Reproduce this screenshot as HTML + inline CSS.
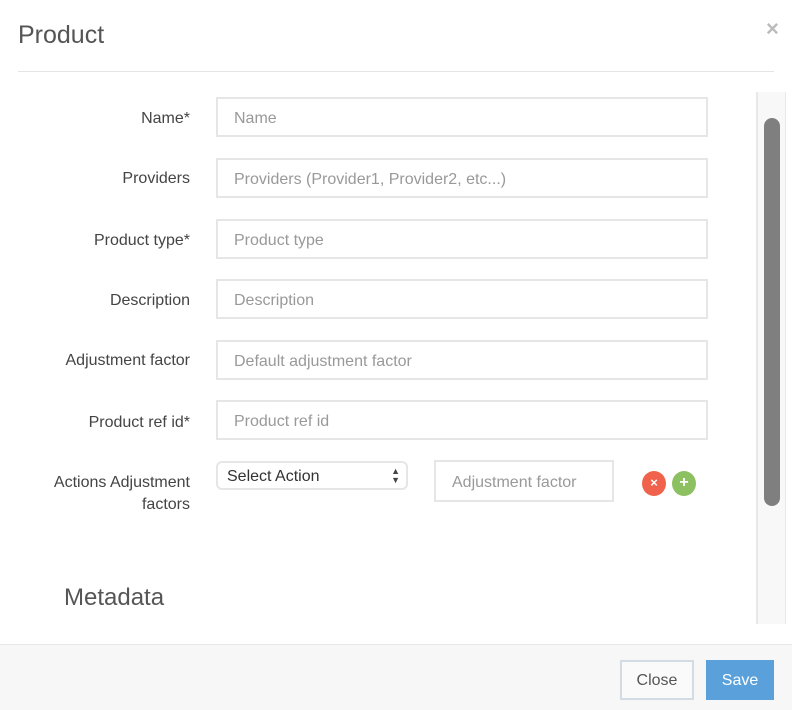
<!DOCTYPE html>
<html><head><style>
*{box-sizing:border-box;margin:0;padding:0}
body{width:792px;height:710px;background:#fff;font-family:"Liberation Sans",sans-serif;position:relative;overflow:hidden;color:#444}
.a{position:absolute}
.lbl{position:absolute;right:602px;font-size:16px;color:#444;text-align:right;line-height:22px}
.in{position:absolute;left:216px;width:492px;height:40px;border:2px solid #e6e6e6;font-size:16px;color:#999;padding-left:16px;line-height:39px}
</style></head><body>
<div class="a" style="left:18px;top:21px;font-size:25px;color:#555">Product</div>
<div class="a" style="left:766px;top:16px;font-size:22px;color:#bbb;font-weight:bold">×</div>
<div class="a" style="left:18px;top:71px;width:756px;height:1px;background:#e5e5e5"></div>

<div class="lbl" style="top:108px">Name*</div><div class="in" style="top:97px">Name</div>
<div class="lbl" style="top:168px">Providers</div><div class="in" style="top:158px">Providers (Provider1, Provider2, etc...)</div>
<div class="lbl" style="top:230px">Product type*</div><div class="in" style="top:219px">Product type</div>
<div class="lbl" style="top:290px">Description</div><div class="in" style="top:279px">Description</div>
<div class="lbl" style="top:350px">Adjustment factor</div><div class="in" style="top:340px">Default adjustment factor</div>
<div class="lbl" style="top:412px">Product ref id*</div><div class="in" style="top:400px">Product ref id</div>
<div class="lbl" style="top:472px">Actions Adjustment<br>factors</div>
<div class="a" style="left:216px;top:461px;width:192px;height:29px;border:2px solid #e6e6e6;border-radius:6px;font-size:16px;color:#333;padding-left:9px;line-height:27px">Select Action<span class="a" style="right:6px;font-size:9px;line-height:9px;top:4px;color:#444">▲<br>▼</span></div>
<div class="a" style="left:434px;top:460px;width:180px;height:42px;border:2px solid #e6e6e6;font-size:16px;color:#999;padding-left:16px;line-height:41px;overflow:hidden;white-space:nowrap">Adjustment factor</div>
<div class="a" style="left:642px;top:471px;width:24px;height:25px;border-radius:50%;background:#f0624c;color:#fff;font-size:13px;font-weight:bold;text-align:center;line-height:24px">×</div>
<div class="a" style="left:672px;top:471px;width:24px;height:25px;border-radius:50%;background:#8cc061;color:#fff;font-size:16px;font-weight:bold;text-align:center;line-height:23px">+</div>
<div class="a" style="left:64px;top:584px;font-size:24px;color:#555">Metadata</div>

<div class="a" style="left:756px;top:92px;width:30px;height:532px;background:#f8f8f8;border-left:2px solid #e8e8e8;border-right:1px solid #e8e8e8"></div>
<div class="a" style="left:764px;top:118px;width:16px;height:388px;background:#7f7f7f;border-radius:8px"></div>

<div class="a" style="left:0;top:644px;width:792px;height:66px;background:#f7f7f7;border-top:1px solid #e8e8e8"></div>
<div class="a" style="left:620px;top:660px;width:74px;height:40px;border:2px solid #d3dbe5;background:#fafafa;font-size:16px;color:#555;text-align:center;line-height:38px">Close</div>
<div class="a" style="left:706px;top:660px;width:68px;height:40px;background:#5aa1dc;color:#fff;font-size:16px;text-align:center;line-height:41px">Save</div>
</body></html>
